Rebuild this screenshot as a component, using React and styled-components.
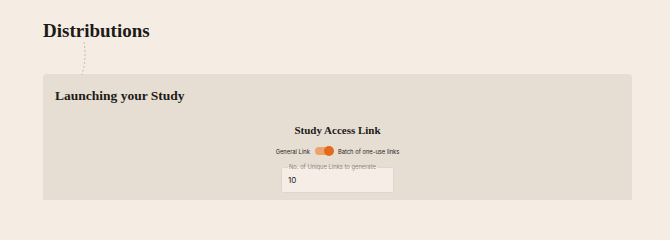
import React from "react";
import styled, { createGlobalStyle } from "styled-components";

const Global = createGlobalStyle`
  html, body { margin: 0; padding: 0; background: #f5ede4; }
  body { font-family: "Inter", "Liberation Sans", sans-serif; }
`;

const Page = styled.div`
  position: relative;
  padding: 18px 38px 0 43px;
  height: 200px;
  box-sizing: border-box;
  overflow: hidden;
`;

const Title = styled.h1`
  margin: 0;
  font-family: "Liberation Serif", serif;
  font-weight: 700;
  font-size: 19px;
  line-height: 26px;
  color: #1d1a17;
`;

const Connector = styled.svg`
  position: absolute;
  left: 76px;
  top: 42px;
`;

const Card = styled.section`
  margin-top: 30px;
  background: #e6ddd3;
  border-radius: 4px;
  padding: 14px 12px 0 12px;
  height: 200px;
  box-sizing: border-box;
`;

const CardTitle = styled.h2`
  margin: 0;
  font-family: "Liberation Serif", serif;
  font-weight: 700;
  font-size: 13.5px;
  line-height: 16px;
  color: #1d1a17;
`;

const Center = styled.div`
  display: flex;
  flex-direction: column;
  align-items: center;
  margin-top: 19px;
`;

const SubTitle = styled.h3`
  margin: 0;
  font-family: "Liberation Serif", serif;
  font-weight: 700;
  font-size: 11px;
  line-height: 14px;
  color: #1d1a17;
`;

const ToggleRow = styled.div`
  display: flex;
  align-items: center;
  gap: 5px;
  margin-top: 10px;
  font-size: 5.8px;
  color: #2a2622;
  white-space: nowrap;
`;

const Track = styled.span`
  position: relative;
  width: 18px;
  height: 8px;
  border-radius: 4px;
  background: #eda46a;
  display: inline-block;
`;

const Knob = styled.span`
  position: absolute;
  right: -1px;
  top: -1px;
  width: 10px;
  height: 10px;
  border-radius: 50%;
  background: #e4691b;
`;

const Field = styled.fieldset`
  margin: 9px 0 0 0;
  width: 113px;
  height: 29px;
  box-sizing: border-box;
  border: 1px solid #e0d6cb;
  border-radius: 2px;
  background: #f6eee6;
  padding: 0 6px;
`;

const Legend = styled.legend`
  font-size: 5.8px;
  color: #8f867d;
  padding: 0 1px;
  line-height: 6px;
  white-space: nowrap;
`;

const Value = styled.div`
  font-size: 8px;
  line-height: 10px;
  color: #1d1a17;
  margin-top: 5px;
`;

export default function App() {
  return (
    <>
      <Global />
      <Page>
        <Title>Distributions</Title>
        <Connector width="16" height="34" viewBox="0 0 16 34">
          <path d="M8 0 C 10 12, 9 22, 6 33" fill="none" stroke="#c9beb2" strokeWidth="1" strokeDasharray="2 2" />
        </Connector>
        <Card>
          <CardTitle>Launching your Study</CardTitle>
          <Center>
            <SubTitle>Study Access Link</SubTitle>
            <ToggleRow>
              <span>General Link</span>
              <Track><Knob /></Track>
              <span>Batch of one-use links</span>
            </ToggleRow>
            <Field>
              <Legend>No. of Unique Links to generate</Legend>
              <Value>10</Value>
            </Field>
          </Center>
        </Card>
      </Page>
    </>
  );
}
